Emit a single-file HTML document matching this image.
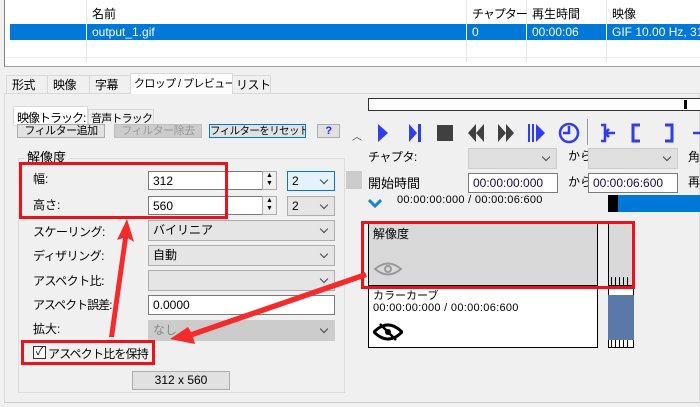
<!DOCTYPE html>
<html><head><meta charset="utf-8"><style>
*{box-sizing:border-box}
body{margin:0;width:700px;height:407px;overflow:hidden;background:#f0f0f0;font-family:"Liberation Sans","Noto Sans CJK JP",sans-serif;font-size:12px;color:#000;position:relative}
.a{position:absolute;white-space:nowrap}
.inp{position:absolute;background:#fff;border:1px solid #7a7a7a;padding:1px 4px;font-size:12px;line-height:16px;white-space:nowrap}
.sel{position:absolute;background:#e5e5e5;border:1px solid #adadad;padding:1px 4px;font-size:12px;line-height:17px;white-space:nowrap}
.sel:after{content:"";position:absolute;right:7px;top:5px;width:5px;height:5px;border-right:1px solid #444;border-bottom:1px solid #444;transform:rotate(45deg)}
.btn{position:absolute;background:#e1e1e1;border:1px solid #adadad;text-align:center;line-height:13px;font-size:11px;letter-spacing:-0.5px;overflow:hidden;white-space:nowrap}
.tab{position:absolute;top:75px;height:19px;border:1px solid #d9d9d9;background:#f0f0f0;padding:0 5px;line-height:18px;font-size:12px;white-space:nowrap;overflow:hidden;letter-spacing:-0.5px}
</style></head><body>
<div class="a" style="left:4px;top:0;width:696px;height:67px;background:#fff;border-left:1px solid #828282;border-bottom:1px solid #a0a0a0"></div>
<div class="a" style="left:86px;top:0;width:1px;height:62px;background:#e5e5e5"></div>
<div class="a" style="left:466px;top:0;width:1px;height:62px;background:#e5e5e5"></div>
<div class="a" style="left:526px;top:0;width:1px;height:62px;background:#e5e5e5"></div>
<div class="a" style="left:606px;top:0;width:1px;height:62px;background:#e5e5e5"></div>
<div class="a" style="left:5px;top:57px;width:695px;height:1px;background:#eee"></div>
<div class="a" style="left:92px;top:5px">名前</div>
<div class="a" style="left:472px;top:5px;letter-spacing:-1px">チャプター</div>
<div class="a" style="left:532px;top:5px">再生時間</div>
<div class="a" style="left:612px;top:5px">映像</div>
<div class="a" style="left:10px;top:24px;width:690px;height:16px;background:#0078d7"></div>
<div class="a" style="left:86px;top:24px;width:1px;height:16px;background:#fff"></div>
<div class="a" style="left:466px;top:24px;width:1px;height:16px;background:#fff"></div>
<div class="a" style="left:526px;top:24px;width:1px;height:16px;background:#fff"></div>
<div class="a" style="left:606px;top:24px;width:1px;height:16px;background:#fff"></div>
<div class="a" style="left:92px;top:25px;color:#fff">output_1.gif</div>
<div class="a" style="left:472px;top:25px;color:#fff">0</div>
<div class="a" style="left:532px;top:25px;color:#fff">00:00:06</div>
<div class="a" style="left:612px;top:25px;color:#fff;overflow:hidden;width:88px">GIF 10.00 Hz, 312</div>
<div class="a" style="left:4px;top:93px;width:696px;height:310px;border:1px solid #d9d9d9;border-bottom:1px solid #ccc"></div>
<div class="tab" style="left:6px;width:42px">形式</div>
<div class="tab" style="left:47px;width:43px">映像</div>
<div class="tab" style="left:89px;width:42px">字幕</div>
<div class="tab" style="left:130px;top:73px;height:21px;width:103px;background:#fff;border-bottom:none;padding:0 3px;font-size:11px;letter-spacing:-0.6px;line-height:20px">クロップ / プレビュー</div>
<div class="tab" style="left:232px;width:39px;padding:0 3px">リスト</div>
<div class="a" style="left:13px;top:106px;width:75px;height:20px;background:#fff;border:1px solid #d9d9d9;padding:2px 3px;font-size:12px;letter-spacing:-1px;overflow:hidden">映像トラック:</div>
<div class="a" style="left:88px;top:109px;width:66px;height:17px;border:1px solid #d9d9d9;border-bottom:none;padding:0 2px;font-size:11px;letter-spacing:-0.8px;overflow:hidden">音声トラック:</div>
<div class="btn" style="left:17px;top:124px;width:88px;height:14px">フィルター追加</div>
<div class="btn" style="left:114px;top:124px;width:88px;height:14px;background:#ccc;color:#999;border-color:#bfbfbf">フィルター除去</div>
<div class="btn" style="left:209px;top:124px;width:97px;height:14px;border:1px solid #0078d7;font-size:10.5px;letter-spacing:-0.6px">フィルターをリセット</div>
<div class="btn" style="left:317px;top:124px;width:23px;height:14px;color:#22f;font-weight:bold">?</div>
<div class="a" style="left:18px;top:158px;width:327px;height:235px;border:1px solid #dcdcdc"></div>
<div class="a" style="left:24px;top:147px;background:#f0f0f0;padding:0 3px;font-size:13px">解像度</div>
<div class="a" style="left:33px;top:170px">幅:</div>
<div class="inp" style="left:148px;top:171px;width:115px;height:19px">312</div>
<div class="a" style="left:262px;top:171px;width:15px;height:19px;border:1px solid #adadad;background:#f0f0f0;font-size:7px;line-height:8px;text-align:center">▲<br>▼</div>
<div class="sel" style="left:287px;top:171px;width:48px;height:20px;background:#e5f1fb;border-color:#0078d7">2</div>
<div class="a" style="left:33px;top:196px">高さ:</div>
<div class="inp" style="left:148px;top:196px;width:115px;height:19px">560</div>
<div class="a" style="left:262px;top:196px;width:15px;height:19px;border:1px solid #adadad;background:#f0f0f0;font-size:7px;line-height:8px;text-align:center">▲<br>▼</div>
<div class="sel" style="left:287px;top:196px;width:48px;height:20px">2</div>
<div class="a" style="left:33px;top:223px;letter-spacing:-0.5px">スケーリング:</div>
<div class="sel" style="left:148px;top:220px;width:187px;height:21px">バイリニア</div>
<div class="a" style="left:33px;top:247px;letter-spacing:-0.5px">ディザリング:</div>
<div class="sel" style="left:148px;top:245px;width:187px;height:21px">自動</div>
<div class="a" style="left:33px;top:272px;letter-spacing:-0.5px">アスペクト比:</div>
<div class="sel" style="left:148px;top:270px;width:187px;height:21px"></div>
<div class="a" style="left:33px;top:296px;letter-spacing:-1px">アスペクト誤差:</div>
<div class="inp" style="left:148px;top:295px;width:187px;height:20px">0.0000</div>
<div class="a" style="left:33px;top:320px">拡大:</div>
<div class="sel" style="left:148px;top:320px;width:187px;height:21px;background:#ccc;border-color:#ccc;color:#888">なし</div>
<div class="a" style="left:33px;top:346px;width:13px;height:13px;border:1px solid #333;background:#fff;font-size:11px;line-height:11px;text-align:center">✓</div>
<div class="a" style="left:48px;top:345px;letter-spacing:-0.8px">アスペクト比を保持</div>
<div class="btn" style="left:132px;top:371px;width:98px;height:19px;line-height:17px;font-size:12px;letter-spacing:0">312 x 560</div>
<div class="a" style="left:368px;top:98px;width:332px;height:13px;border:1px solid #333;border-right:none;background:#fff"></div>
<div class="a" style="left:684px;top:100px;width:3px;height:9px;background:#000"></div>
<div class="a" style="left:352px;top:128px;font-size:10px;color:#444">︿</div>
<svg class="a" style="left:370px;top:118px" width="330" height="30" viewBox="370 118 330 30">
<g fill="#2f3cf0">
<polygon points="378,124 388,133 378,142"/>
<polygon points="409,124 417,133 409,142"/><rect x="418" y="124" width="3" height="18"/>
<rect x="437" y="125" width="16" height="16" fill="#404040"/>
<polygon points="476,124 468,133 476,142" fill="#404040"/><polygon points="484,124 476,133 484,142" fill="#404040"/>
<polygon points="498,124 506,133 498,142" fill="#404040"/><polygon points="506,124 514,133 506,142" fill="#404040"/>
<rect x="528" y="124" width="2" height="18"/><rect x="532" y="124" width="2" height="18"/><polygon points="536,124 545,133 536,142"/>
</g>
<circle cx="569" cy="133" r="9" fill="none" stroke="#2f3cf0" stroke-width="2.5"/>
<path d="M569 126V133H563" stroke="#2f3cf0" stroke-width="2.5" fill="none"/>
<rect x="587" y="119" width="1" height="26" fill="#999"/>
<path d="M601 125H605V141H601M605 133H615M609 129L605 133L609 137" stroke="#2f3cf0" stroke-width="2.5" fill="none"/>
<path d="M640 125H633V141H640" stroke="#2f3cf0" stroke-width="3" fill="none"/>
<path d="M665 125H672V141H665" stroke="#2f3cf0" stroke-width="3" fill="none"/>
<path d="M693 133H700" stroke="#2f3cf0" stroke-width="2.5"/>
</svg>
<div class="a" style="left:368px;top:148px;letter-spacing:-0.5px">チャプタ:</div>
<div class="sel" style="left:468px;top:148px;width:89px;height:21px;background:#e0e0e0;border-color:#ccc"></div>
<div class="a" style="left:568px;top:147px">から</div>
<div class="sel" style="left:588px;top:148px;width:90px;height:21px;background:#e0e0e0;border-color:#ccc"></div>
<div class="a" style="left:688px;top:148px">角</div>
<div class="a" style="left:346px;top:171px;width:16px;height:18px;background:#ccc"></div>
<div class="a" style="left:368px;top:173px;font-size:13px">開始時間</div>
<div class="inp" style="left:468px;top:173px;width:90px;height:20px;color:#1a0a50">00:00:00:000</div>
<div class="a" style="left:568px;top:173px">から</div>
<div class="inp" style="left:588px;top:173px;width:90px;height:20px;color:#1a0a50">00:00:06:600</div>
<div class="a" style="left:688px;top:173px">再</div>
<svg class="a" style="left:368px;top:198px" width="14" height="10"><path d="M1 2L7 8L13 2" stroke="#1a7fd9" stroke-width="3" fill="none"/></svg>
<div class="a" style="left:397px;top:194px;font-size:11px;letter-spacing:0.3px">00:00:00:000 / 00:00:06:600</div>
<div class="a" style="left:608px;top:195px;width:92px;height:17px;background:#0078d7"></div>
<div class="a" style="left:608px;top:195px;width:10px;height:17px;background:#000"></div>
<div class="a" style="left:368px;top:222px;width:230px;height:64px;background:#d9d9d9;border:1px solid #000"></div>
<div class="a" style="left:373px;top:225px;font-size:12px">解像度</div>
<svg class="a" style="left:374px;top:262px" width="28" height="14"><path d="M1 7Q14 -4 27 7Q14 18 1 7Z" stroke="#999" stroke-width="2" fill="none"/><circle cx="14" cy="7" r="3" fill="none" stroke="#999" stroke-width="2"/></svg>
<div class="a" style="left:608px;top:222px;width:26px;height:64px;background:#d9d9d9;border:1px solid #000"></div>
<div class="a" style="left:611px;top:277px;width:20px;height:8px;background:repeating-linear-gradient(90deg,#000 0 1px,transparent 1px 4px)"></div>
<div class="a" style="left:368px;top:286px;width:230px;height:62px;background:#fff;border:1px solid #000;border-top:none"></div>
<div class="a" style="left:373px;top:287px;font-size:11px">カラーカーブ</div>
<div class="a" style="left:373px;top:302px;font-size:11px;letter-spacing:0.3px">00:00:00:000 / 00:00:06:600</div>
<svg class="a" style="left:373px;top:322px" width="30" height="20"><path d="M1 10Q15 -4 29 10Q15 24 1 10Z" stroke="#000" stroke-width="3" fill="none"/><circle cx="15" cy="10" r="3" fill="#000"/><path d="M7 2L23 18" stroke="#000" stroke-width="2.5"/></svg>
<div class="a" style="left:608px;top:286px;width:26px;height:62px;background:#fff;border:1px solid #000;border-top:none"></div>
<div class="a" style="left:608px;top:295px;width:26px;height:45px;background:#5b79a8"></div>
<div class="a" style="left:611px;top:340px;width:20px;height:8px;background:repeating-linear-gradient(90deg,#000 0 1px,transparent 1px 4px)"></div>
<div class="a" style="left:19px;top:162px;width:209px;height:57px;border:3px solid #e8141b"></div>
<div class="a" style="left:21px;top:340px;width:134px;height:25px;border:3px solid #e8141b"></div>
<div class="a" style="left:361px;top:221px;width:274px;height:68px;border:3px solid #e8141b"></div>
<svg class="a" style="left:0;top:0" width="700" height="407">
<polygon points="109,337 114,337 128,238 134,242 127,219 117,240 123,238" fill="#f52a2a"/>
<polygon points="365,272 367,277 193,337 195,344 170,339 188,327 191,332" fill="#f52a2a"/>
</svg>
</body></html>
